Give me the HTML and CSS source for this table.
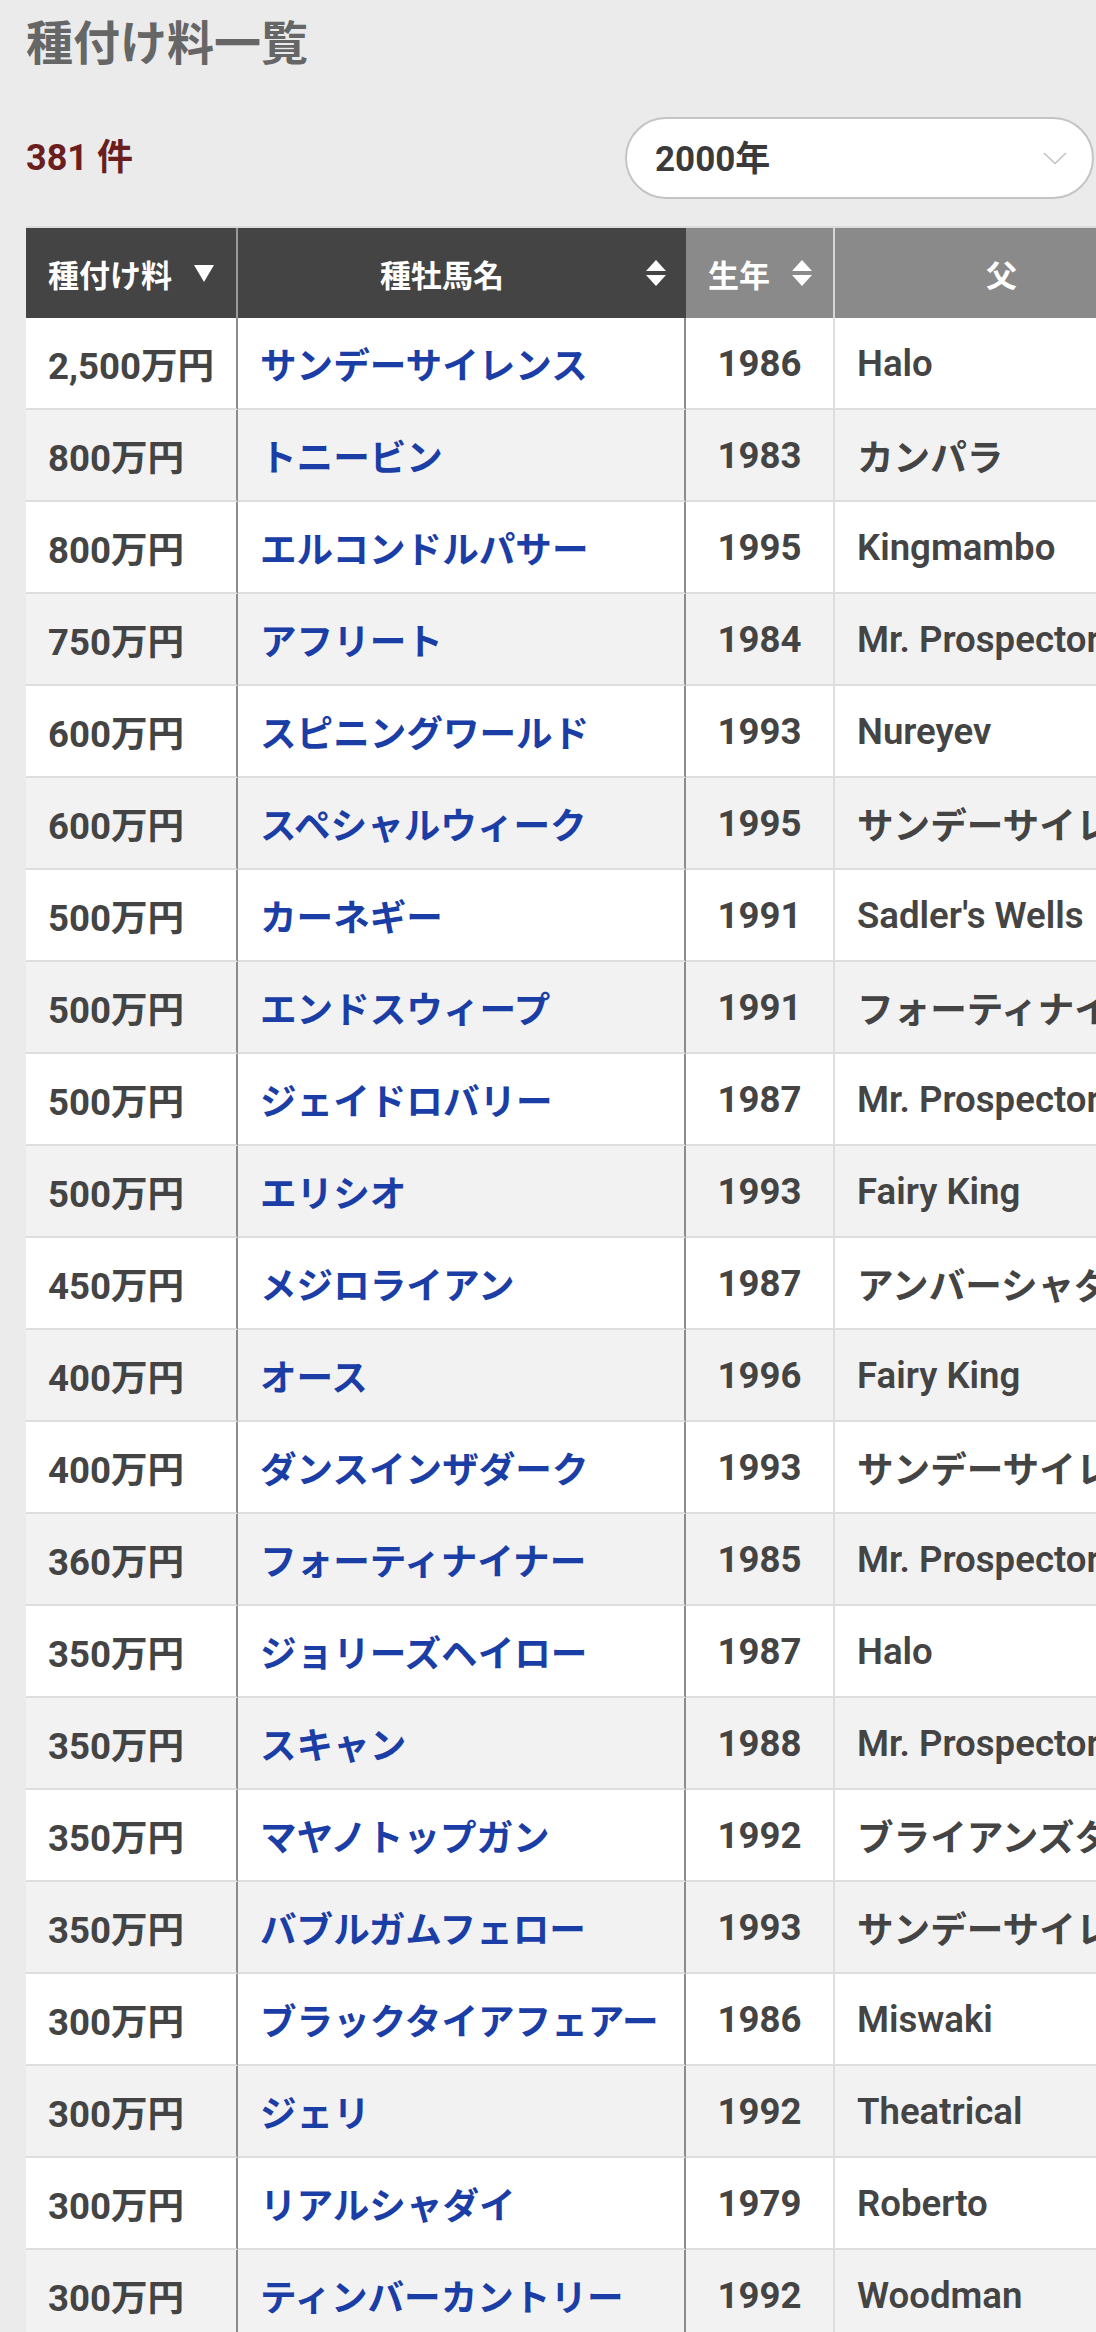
FILE: index.html
```html
<!DOCTYPE html>
<html lang="ja">
<head>
<meta charset="utf-8">
<title>種付け料一覧</title>
<link rel="stylesheet" href="styles.css">
</head>
<body>
<main class="page">
  <h1 class="title">種付け料一覧</h1>
  <div class="toolbar">
    <div class="count">381 件</div>
    <div class="select">
      <span class="select-value">2000年</span>
      <svg class="chevron" width="24" height="13" viewBox="0 0 24 13"><polyline points="1,1 12,11.5 23,1" fill="none" stroke="#c2c2c2" stroke-width="1.6"/></svg>
    </div>
  </div>
  <div class="table-wrap">
    <table class="fees">
      <colgroup>
        <col class="c-fee"><col class="c-name"><col class="c-year"><col class="c-sire">
      </colgroup>
      <thead>
        <tr>
          <th class="h-fee"><div class="th-in"><span class="lbl">種付け料</span><svg class="ic" width="20" height="17" viewBox="0 0 20 17"><polygon points="0,0 20,0 10,17" fill="#fff"/></svg></div></th>
          <th class="h-name"><div class="th-in"><span class="lbl grow">種牡馬名</span><svg class="ic" width="20" height="26" viewBox="0 0 20 26"><polygon points="10,0 20,11 0,11" fill="#fff"/><polygon points="0,15 20,15 10,26" fill="#fff"/></svg></div></th>
          <th class="h-year"><div class="th-in"><span class="lbl">生年</span><svg class="ic" width="20" height="26" viewBox="0 0 20 26"><polygon points="10,0 20,11 0,11" fill="#fff"/><polygon points="0,15 20,15 10,26" fill="#fff"/></svg></div></th>
          <th class="h-sire"><div class="th-in"><span class="lbl grow">父</span></div></th>
        </tr>
      </thead>
      <tbody>
        <tr><td class="fee">2,500万円</td><td class="name"><a href="#">サンデーサイレンス</a></td><td class="year">1986</td><td class="sire">Halo</td></tr>
        <tr><td class="fee">800万円</td><td class="name"><a href="#">トニービン</a></td><td class="year">1983</td><td class="sire">カンパラ</td></tr>
        <tr><td class="fee">800万円</td><td class="name"><a href="#">エルコンドルパサー</a></td><td class="year">1995</td><td class="sire">Kingmambo</td></tr>
        <tr><td class="fee">750万円</td><td class="name"><a href="#">アフリート</a></td><td class="year">1984</td><td class="sire">Mr. Prospector</td></tr>
        <tr><td class="fee">600万円</td><td class="name"><a href="#">スピニングワールド</a></td><td class="year">1993</td><td class="sire">Nureyev</td></tr>
        <tr><td class="fee">600万円</td><td class="name"><a href="#">スペシャルウィーク</a></td><td class="year">1995</td><td class="sire">サンデーサイレンス</td></tr>
        <tr><td class="fee">500万円</td><td class="name"><a href="#">カーネギー</a></td><td class="year">1991</td><td class="sire">Sadler's Wells</td></tr>
        <tr><td class="fee">500万円</td><td class="name"><a href="#">エンドスウィープ</a></td><td class="year">1991</td><td class="sire">フォーティナイナー</td></tr>
        <tr><td class="fee">500万円</td><td class="name"><a href="#">ジェイドロバリー</a></td><td class="year">1987</td><td class="sire">Mr. Prospector</td></tr>
        <tr><td class="fee">500万円</td><td class="name"><a href="#">エリシオ</a></td><td class="year">1993</td><td class="sire">Fairy King</td></tr>
        <tr><td class="fee">450万円</td><td class="name"><a href="#">メジロライアン</a></td><td class="year">1987</td><td class="sire">アンバーシャダイ</td></tr>
        <tr><td class="fee">400万円</td><td class="name"><a href="#">オース</a></td><td class="year">1996</td><td class="sire">Fairy King</td></tr>
        <tr><td class="fee">400万円</td><td class="name"><a href="#">ダンスインザダーク</a></td><td class="year">1993</td><td class="sire">サンデーサイレンス</td></tr>
        <tr><td class="fee">360万円</td><td class="name"><a href="#">フォーティナイナー</a></td><td class="year">1985</td><td class="sire">Mr. Prospector</td></tr>
        <tr><td class="fee">350万円</td><td class="name"><a href="#">ジョリーズヘイロー</a></td><td class="year">1987</td><td class="sire">Halo</td></tr>
        <tr><td class="fee">350万円</td><td class="name"><a href="#">スキャン</a></td><td class="year">1988</td><td class="sire">Mr. Prospector</td></tr>
        <tr><td class="fee">350万円</td><td class="name"><a href="#">マヤノトップガン</a></td><td class="year">1992</td><td class="sire">ブライアンズタイム</td></tr>
        <tr><td class="fee">350万円</td><td class="name"><a href="#">バブルガムフェロー</a></td><td class="year">1993</td><td class="sire">サンデーサイレンス</td></tr>
        <tr><td class="fee">300万円</td><td class="name"><a href="#">ブラックタイアフェアー</a></td><td class="year">1986</td><td class="sire">Miswaki</td></tr>
        <tr><td class="fee">300万円</td><td class="name"><a href="#">ジェリ</a></td><td class="year">1992</td><td class="sire">Theatrical</td></tr>
        <tr><td class="fee">300万円</td><td class="name"><a href="#">リアルシャダイ</a></td><td class="year">1979</td><td class="sire">Roberto</td></tr>
        <tr><td class="fee">300万円</td><td class="name"><a href="#">ティンバーカントリー</a></td><td class="year">1992</td><td class="sire">Woodman</td></tr>
      </tbody>
    </table>
  </div>
</main>
</body>
</html>
```

FILE: styles.css
```css
* { box-sizing: border-box; }

html, body {
  margin: 0;
  padding: 0;
  background: #ebebeb;
  overflow: hidden;
}

body {
  font-family: Roboto, "Noto Sans CJK JP", "Noto Sans", sans-serif;
  color: #444;
}

.page {
  padding-left: 26px;
}

.title {
  margin: 0;
  padding-top: 14px;
  font-size: 47px;
  line-height: 60px;
  font-weight: 700;
  color: #666;
}

.toolbar {
  margin-top: 43px;
  height: 82px;
  display: flex;
  align-items: center;
  justify-content: space-between;
  padding-right: 2px;
}

.count {
  font-size: 36px;
  font-weight: 700;
  color: #6b1e1e;
  padding-bottom: 8px;
}

.select {
  width: 469px;
  height: 82px;
  border: 2px solid #c4c4c4;
  border-radius: 41px;
  background: #fff;
  display: flex;
  align-items: center;
  justify-content: space-between;
  padding: 0 25px 0 28px;
}

.select-value {
  font-size: 35px;
  font-weight: 700;
  color: #3a3a3a;
  padding-bottom: 5px;
}

.chevron { display: block; }

.table-wrap {
  margin-top: 27px;
  overflow: hidden;
}

.fees {
  border-collapse: separate;
  border-spacing: 0;
  table-layout: fixed;
  width: 1140px;
  border-top: 2px solid #dcdcdc;
}

.c-fee { width: 212px; }
.c-name { width: 448px; }
.c-year { width: 149px; }
.c-sire { width: 331px; }

.fees th {
  height: 90px;
  padding: 0 20px 0 22px;
  font-size: 31px;
  font-weight: 700;
  color: #fff;
  background: #444;
  white-space: nowrap;
}

.fees th.h-year,
.fees th.h-sire {
  background: #8a8a8a;
}

.fees th.h-fee { border-right: 2px solid #9a9a9a; }
.fees th.h-year { border-right: 2px solid #d6d6d6; }

.th-in {
  display: flex;
  align-items: center;
  gap: 22px;
}

.lbl { flex: none; }

.th-in .grow {
  flex: 1;
  text-align: center;
}

.ic { flex: none; display: block; }

.fees td {
  height: 92px;
  padding: 0 22px;
  font-size: 36.6px;
  font-weight: 700;
  color: #444;
  background: #fff;
  border-bottom: 2px solid #dedede;
  white-space: nowrap;
  overflow: hidden;
}

.fees tbody tr:nth-child(even) td {
  background: #f2f2f2;
}

.fees td.fee,
.fees td.name {
  border-right: 2px solid #8c8c8c;
}

.fees td.year {
  text-align: center;
  border-right: 2px solid #dedede;
}

.fees td.sire {
  font-weight: 600;
}

.fees td.name a {
  color: #1b3ea6;
  text-decoration: none;
  font-weight: 700;
}
```
